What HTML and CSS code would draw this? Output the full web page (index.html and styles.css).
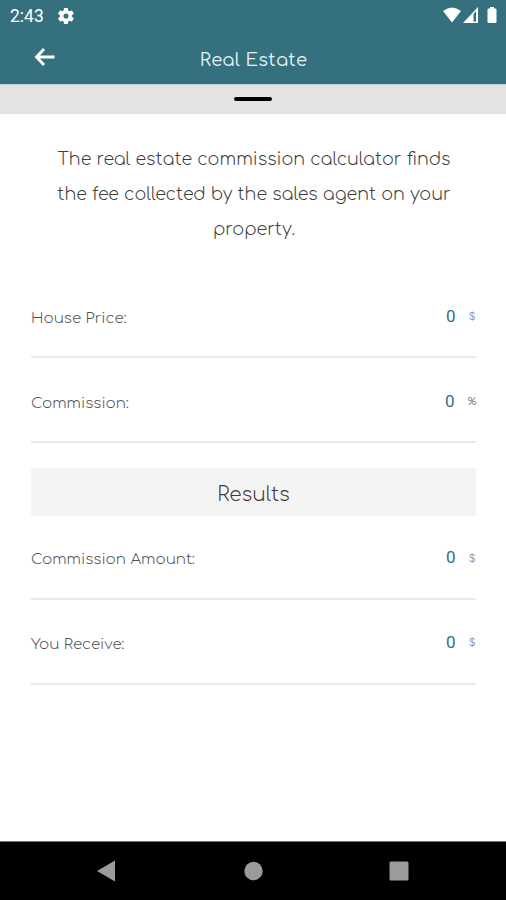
FILE: index.html
```html
<!DOCTYPE html>
<html lang="en">
<head>
<meta charset="utf-8">
<title>Real Estate</title>
<link rel="stylesheet" href="styles.css">
</head>
<body>
<header class="top">
  <div class="status">
    <span class="time">2:43</span>
    <svg class="gear" viewBox="2 2 20 20"><path fill="#fff" d="M19.4 13c0-.3.1-.6.1-1s0-.7-.1-1l2.1-1.600c.2-.2.3-.5.1-.7l-2-3.400c-.1-.2-.4-.3-.6-.2l-2.500 1c-.5-.4-1.100-.7-1.700-1l-.4-2.600c0-.3-.2-.5-.5-.5h-4c-.3 0-.5.2-.5.5L9 5.100c-.6.300-1.200.600-1.700 1l-2.500-1c-.2-.1-.5 0-.6.2l-2 3.400c-.1.2-.1.5.1.7L4.500 11c0 .3-.1.600-.1 1s0 .7.1 1l-2.200 1.600c-.2.2-.2.500-.1.700l2 3.400c.1.2.4.3.6.2l2.500-1c.5.4 1.100.7 1.700 1l.4 2.600c0 .3.2.5.5.5h4c.3 0 .5-.2.5-.5l.4-2.600c.6-.3 1.200-.6 1.700-1l2.500 1c.2.1.5 0 .6-.2l2-3.400c.1-.2.1-.5-.1-.7zM12 15.200a3.200 3.200 0 1 1 0-6.400 3.200 3.200 0 0 1 0 6.400z"/></svg>
    <svg class="signals" viewBox="0 0 56 18">
      <path fill="#fff" d="M1 5Q10-2 19 5L10 16.500z"/>
      <path fill="#fff" fill-rule="evenodd" d="M21 17 36 1v16zM31.500 8V15.500h2.500V5z"/>
      <path fill="#fff" d="M46.500 2.500H48V1h4v1.500h1.500q1 0 1 1V16q0 1-1 1h-7q-1 0-1-1V3.500q0-1 1-1z"/>
    </svg>
  </div>
  <div class="bar">
    <svg class="back" viewBox="0 0 22 20"><path d="M10 2 2.500 10l7.500 8M3 10h17.500" fill="none" stroke="#fff" stroke-width="2.900"/></svg>
    <h1 class="title">Real Estate</h1>
  </div>
</header>
<div class="handle"><span class="grip"></span></div>
<main class="content">
  <p class="intro">The real estate commission calculator finds the fee collected by the sales agent on your property.</p>
  <div class="row"><span class="label">House Price:</span><span class="value">0</span><span class="unit">$</span></div>
  <div class="row"><span class="label">Commission:</span><span class="value pct">0</span><span class="unit percent">%</span></div>
  <h2 class="results">Results</h2>
  <div class="row after"><span class="label">Commission Amount:</span><span class="value">0</span><span class="unit">$</span></div>
  <div class="row last"><span class="label">You Receive:</span><span class="value">0</span><span class="unit">$</span></div>
</main>
<nav class="nav">
  <svg class="nav-icons" viewBox="0 0 506 58"><path d="M97 29 115 18.500v21z"/><circle cx="253.500" cy="29" r="9.200"/><rect x="389.500" y="19.500" width="19" height="19" rx="1.500"/></svg>
</nav>
</body>
</html>
```

FILE: styles.css
```css
* { box-sizing: border-box; }
body {
  margin: 0;
  height: 900px;
  display: flex;
  flex-direction: column;
  overflow: hidden;
  background: #fff;
  color: #3c3c3c;
  font-family: Comfortaa, Quicksand, Lato, sans-serif;
}
svg { display: block; flex: none; }
h1, h2, p { margin: 0; font-weight: 300; }
.top { height: 84px; background: #35707f; color: #fff; }
.status { height: 32px; display: flex; align-items: center; padding: 0 8px 0 10px; }
.time { width: 48px; font: 400 17.500px Roboto, sans-serif; }
.gear { width: 16px; height: 16px; }
.signals { width: 56px; height: 18px; margin-left: auto; margin-top: -2px; }
.bar { height: 52px; display: flex; align-items: flex-start; padding: 0 34px; }
.back { width: 22px; height: 20px; margin-top: 15px; }
.title { flex: 1; margin: 14px 21px 0 0; color: #e6f0f3; font-size: 18px; font-weight: 400; line-height: 28px; text-align: center; letter-spacing: .3px; }
.handle { height: 30px; padding-top: 13px; background: #e4e4e4; border-top: 1px solid #c3cdcf; }
.grip { display: block; width: 38px; height: 4px; margin: -1px auto 0; border-radius: 2px; background: #000; }
.content { flex: 1; padding: 28px 30px 0 31px; }
.intro { height: 131px; padding: 0 19px 0 20px; font-size: 17.500px; line-height: 35px; text-align: center; }
.row { height: 85px; display: flex; align-items: center; border-bottom: 2px solid #e9e9e9; padding-top: 2px; }
.label { flex: 1; padding-top: 5px; color: #505050; font-size: 15.100px; font-weight: 300; }
.value { width: 22px; color: #35707f; font: 400 17px Roboto, sans-serif; }
.pct { width: 23px; }
.unit { width: 8px; padding-top: 2px; color: #888; font-size: 11px; font-weight: 400; display: flex; justify-content: center; }
.percent { padding-top: 1px; font-size: 10.500px; }
.results { height: 48px; margin-top: 25px; background: #f4f4f4; font-size: 20px; line-height: 54px; text-align: center; }
.after { height: 84px; padding-top: 0; }
.last { padding-top: 0; }
.nav { height: 59px; background: #000; border-top: 1px solid #777; }
.nav-icons { width: 506px; height: 58px; fill: #9b9b9b; }
```
